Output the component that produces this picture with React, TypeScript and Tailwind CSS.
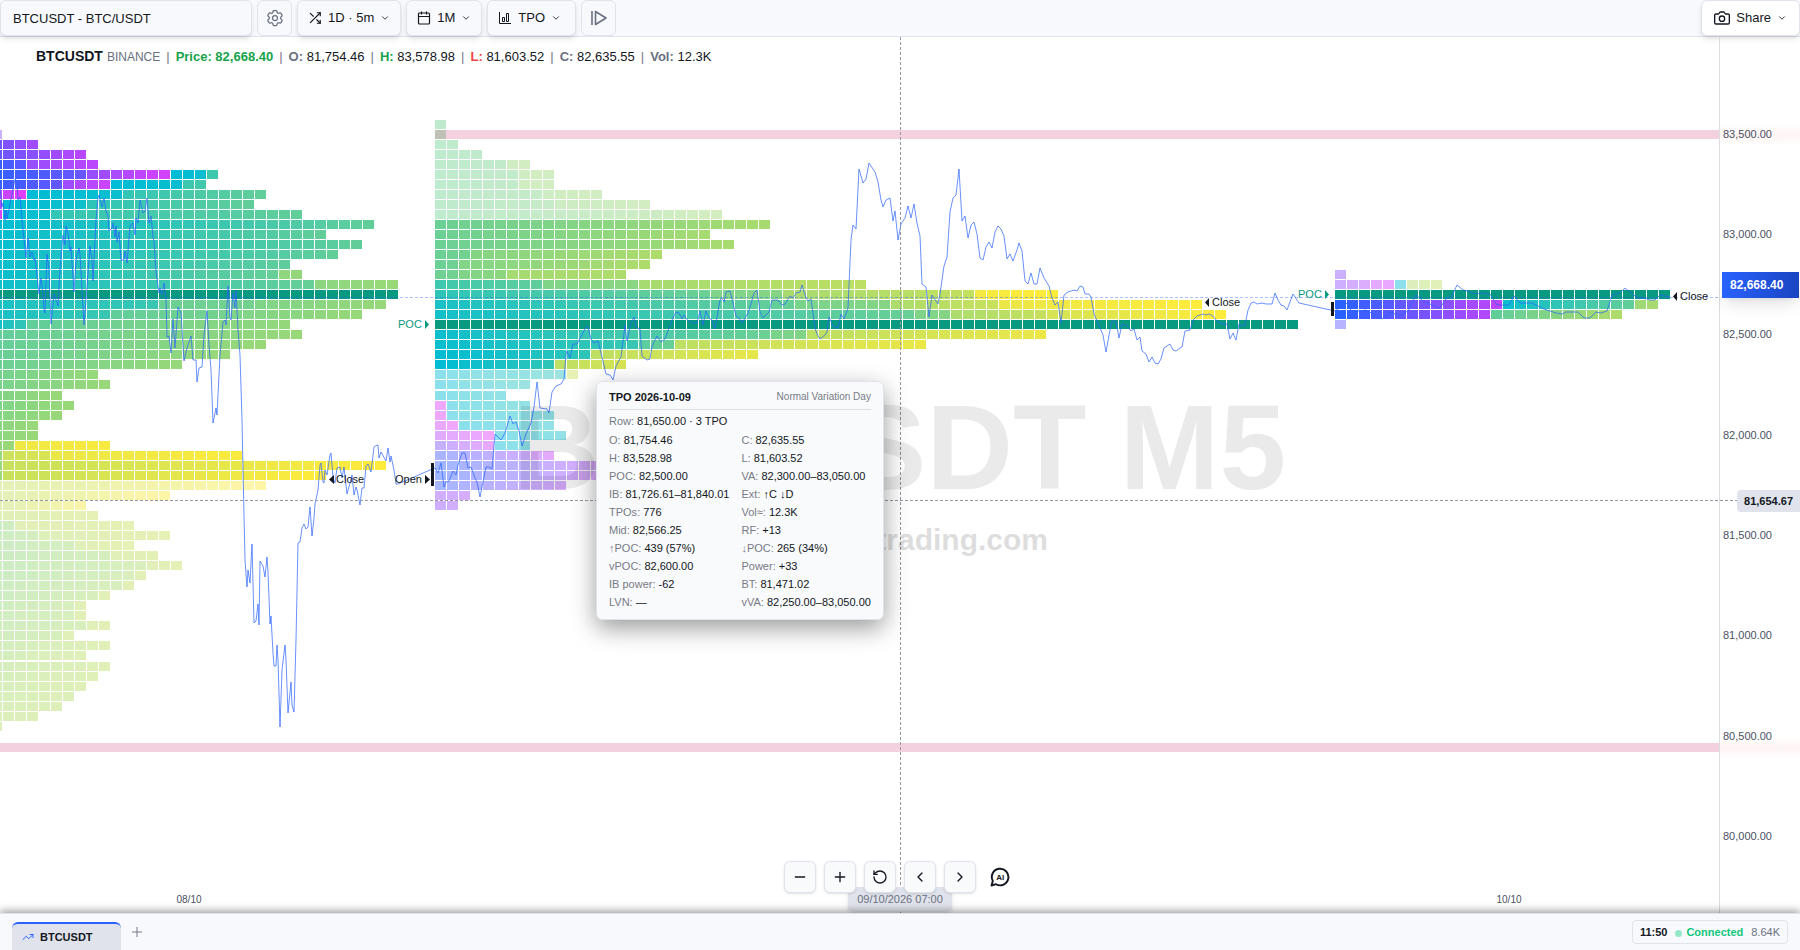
import type { ReactNode } from "react";
import { ChevronDown, ChevronLeft, ChevronRight, Minus, Plus, RotateCcw, TrendingUp } from "lucide-react";
import { FiCamera, FiShuffle } from "react-icons/fi";
import { HiOutlineCog6Tooth } from "react-icons/hi2";

// [number of blocks, first tone, last tone]
// tones 0..1 run from blue to magenta, tones 1..2 from cyan to yellow
type Run = [number, number, number];

type ProfileRow = {
  runs: Run[];
  faded?: boolean;
  poc?: boolean;
};

type Profile = {
  id: string;
  x: number;
  firstRow: number;
  rows: ProfileRow[];
};

const CHART_TOP = 37;
const CELL_WIDTH = 12;

const va = (...runs: Run[]): ProfileRow => ({ runs });
const out = (...runs: Run[]): ProfileRow => ({ runs, faded: true });
const poc = (count: number): ProfileRow => ({ runs: [[count, 1, 1]], poc: true });

const profiles: Profile[] = [
  {
    id: "2026-10-08",
    x: -9,
    firstRow: 0,
    rows: [
      out([1, 0.5, 0.5]),
      va([4, 0.38, 0.65]),
      va([8, 0.33, 0.78]),
      va([3, 0.1, 0.25], [6, 0.6, 0.8]),
      va([8, 0.05, 0.34], [7, 0.6, 0.93], [3, 1, 1.03], [1, 1.24, 1.24]),
      va([6, 0.08, 0.3], [4, 0.64, 0.88], [6, 1, 1.03], [2, 1.24, 1.26]),
      va([3, 0.75, 1], [8, 1, 1.04], [12, 1.2, 1.38]),
      va([1, 0.7, 0.7], [7, 1, 1.06], [14, 1.18, 1.38]),
      va([1, 0.95, 0.95], [4, 1, 1.05], [21, 1.2, 1.38]),
      va([32, 1.01, 1.38]),
      va([28, 1.02, 1.38]),
      va([31, 1.03, 1.38]),
      va([29, 1.04, 1.38]),
      va([25, 1.04, 1.37]),
      va([24, 1.04, 1.4], [2, 1.56, 1.58]),
      va([27, 1.05, 1.4], [7, 1.55, 1.6]),
      poc(34),
      va([14, 1.1, 1.22], [8, 1.42, 1.45], [11, 1.5, 1.59]),
      va([10, 1.1, 1.22], [10, 1.38, 1.46], [11, 1.5, 1.59]),
      va([3, 1.08, 1.18], [22, 1.38, 1.58]),
      va([26, 1.38, 1.6]),
      va([23, 1.39, 1.6]),
      va([20, 1.4, 1.6]),
      va([16, 1.42, 1.59]),
      va([9, 1.45, 1.59]),
      va([10, 1.47, 1.6]),
      va([6, 1.5, 1.6]),
      va([7, 1.5, 1.6]),
      va([6, 1.52, 1.6]),
      va([4, 1.54, 1.6]),
      va([4, 1.55, 1.6]),
      va([2, 1.56, 1.6], [8, 1.94, 1.97]),
      va([1, 1.6, 1.6], [4, 1.8, 1.85], [16, 1.92, 1.98]),
      va([1, 1.6, 1.6], [32, 1.78, 2]),
      va([1, 1.62, 1.62], [27, 1.78, 2]),
      out([23, 1.75, 2]),
      out([15, 1.75, 2]),
      out([8, 1.74, 1.94]),
      out([9, 1.73, 1.78]),
      out([2, 1.58, 1.6], [10, 1.74, 1.78]),
      out([4, 1.57, 1.62], [11, 1.72, 1.78]),
      out([7, 1.57, 1.64], [5, 1.74, 1.78]),
      out([10, 1.57, 1.65], [4, 1.74, 1.76]),
      out([13, 1.57, 1.67], [3, 1.74, 1.76]),
      out([12, 1.57, 1.67], [1, 1.75, 1.75]),
      out([11, 1.58, 1.67], [1, 1.75, 1.75]),
      out([9, 1.58, 1.67], [1, 1.75, 1.75]),
      out([7, 1.59, 1.66], [1, 1.75, 1.75]),
      out([7, 1.6, 1.66], [1, 1.75, 1.75]),
      out([8, 1.6, 1.67], [2, 1.74, 1.75]),
      out([6, 1.61, 1.66], [1, 1.74, 1.74]),
      out([10, 1.62, 1.74]),
      out([8, 1.63, 1.73]),
      out([10, 1.64, 1.74]),
      out([9, 1.65, 1.73]),
      out([8, 1.66, 1.73]),
      out([7, 1.67, 1.72]),
      out([6, 1.68, 1.72]),
      out([4, 1.69, 1.72]),
      out([1, 1.7, 1.7]),
    ],
  },
  {
    id: "2026-10-09",
    x: 435,
    firstRow: -1,
    rows: [
      out([1, 1.44, 1.44]),
      out([1, 1.44, 1.44]),
      out([2, 1.44, 1.45]),
      out([4, 1.44, 1.46]),
      out([6, 1.44, 1.47], [2, 1.6, 1.61]),
      out([7, 1.44, 1.48], [3, 1.6, 1.61]),
      out([7, 1.44, 1.48], [3, 1.6, 1.61]),
      out([9, 1.44, 1.5], [5, 1.59, 1.61]),
      out([10, 1.44, 1.51], [8, 1.57, 1.61]),
      out([24, 1.44, 1.62]),
      va([28, 1.42, 1.66]),
      va([23, 1.42, 1.65]),
      va([25, 1.42, 1.66]),
      va([3, 1.42, 1.44], [16, 1.52, 1.68]),
      va([2, 1.42, 1.43], [16, 1.51, 1.68]),
      va([2, 1.43, 1.44], [4, 1.5, 1.55], [10, 1.65, 1.68]),
      va([9, 1.25, 1.37], [8, 1.5, 1.54], [19, 1.65, 1.74]),
      va([23, 1.18, 1.42], [6, 1.5, 1.52], [16, 1.66, 1.76], [7, 1.96, 2]),
      va([30, 1.1, 1.4], [8, 1.48, 1.52], [9, 1.68, 1.78], [17, 1.92, 2]),
      va([40, 1.08, 1.41], [3, 1.5, 1.52], [8, 1.68, 1.77], [15, 1.84, 2]),
      poc(72),
      va([28, 1.05, 1.42], [3, 1.48, 1.5], [20, 1.74, 1.92]),
      va([17, 1.04, 1.22], [3, 1.36, 1.4], [21, 1.74, 1.92]),
      va([13, 1.01, 1.18], [14, 1.74, 1.9]),
      va([10, 1, 1.18], [6, 1.74, 1.84]),
      out([11, 1, 1.15], [1, 1.8, 1.8]),
      out([8, 1, 1.14]),
      out([6, 1, 1.06]),
      out([1, 0.97, 0.97], [7, 1, 1.08]),
      out([1, 0.96, 0.96], [9, 1, 1.06]),
      out([2, 0.93, 1], [8, 1, 1.05]),
      out([5, 0.8, 0.99], [6, 1, 1.05]),
      out([5, 0.48, 0.9], [3, 1, 1.03]),
      out([8, 0.15, 0.6], [2, 0.78, 0.84]),
      out([14, 0.05, 0.72]),
      out([14, 0.05, 0.74]),
      out([11, 0.1, 0.68]),
      out([3, 0.62, 0.68]),
      out([2, 0.58, 0.62]),
    ],
  },
  {
    id: "2026-10-10",
    x: 1335,
    firstRow: 14,
    rows: [
      out([1, 0.55, 0.55]),
      out([5, 0.58, 0.93], [1, 1, 1], [3, 1.7, 1.74]),
      poc(28),
      va([14, 0, 0.8], [11, 1.05, 1.38], [2, 1.62, 1.66]),
      va([13, 0, 0.74], [11, 1.38, 1.68]),
      out([1, 0.3, 0.3]),
    ],
  },
];

const pricePoints = `
0,187 2,207 3,203 5,220 6,210 7,219 11,199 15,179 17,181 18,200 20,197 23,230 26,258 28,238 30,257 32,252 34,260 35,258
39,294 41,278 43,294 44,310 45,313 47,254 49,270 51,324 54,294 56,300 58,306 60,270 63,235 65,245 66,226 68,233 70,251
71,247 74,292 76,260 79,248 80,255 84,325 86,300 90,246 92,260 93,281 96,220 98,198 99,195 102,207 104,198 106,211
108,216 109,231 112,228 113,223 115,237 116,226 117,242 119,232 121,260 124,260 125,251 127,263 130,226 133,223 135,235
136,218 138,223 140,200 143,213 145,211 147,198 149,223 151,216 153,237 154,242 156,272 159,293 160,288 162,295 164,283
166,300 167,337 169,336 171,353 173,319 175,348 178,307 181,313 184,361 187,348 191,336 193,360 196,360 197,382 199,368
202,367 204,335 207,311 209,345 211,370 213,423 216,408 217,415 220,355 223,322 225,320 226,325 228,286 230,318 231,320
233,293 235,308 236,290 238,330 240,355 242,420 243,470 245,560 247,587 248,570 250,583 252,544 254,623 256,621 258,604
259,625 260,561 263,566 265,577 267,557 268,572 270,624 271,616 273,653 274,666 276,666 277,645 278,660 280,727 282,670
285,645 286,660 288,713 291,682 292,705 294,712 296,640 298,543 300,542 302,528 304,524 306,529 308,527 310,507 312,536
314,518 315,504 318,490 320,465 321,463 323,482 324,483 325,470 327,475 330,455 331,453 333,478 335,483 337,468 340,467
342,478 344,467 347,494 350,483 352,475 354,495 356,487 357,490 360,505 362,488 364,488 366,466 368,464 371,472 374,447
375,446 378,445 379,458 381,452 386,461 388,448 390,462 391,456 394,470 396,484 398,484 430,470 435,468 438,473 441,463
444,487 446,482 449,481 453,471 456,475 458,465 462,453 465,453 468,468 471,467 475,478 477,482 480,497 482,487 486,467
489,467 492,469 495,434 501,440 505,433 510,416 513,424 516,422 519,431 522,446 526,434 531,423 534,407 537,382 540,408
547,409 549,413 552,392 556,386 561,384 564,379 566,355 567,351 570,358 573,344 577,344 583,333 586,327 588,327 591,339
594,343 598,341 602,357 606,374 610,375 613,380 616,366 621,357 625,325 627,341 631,323 634,317 636,327 640,329 642,356
647,360 650,359 652,346 657,336 661,342 665,339 672,320 676,312 679,313 682,319 684,315 688,321 693,323 697,323 700,311
703,325 706,311 709,318 712,320 715,329 720,300 722,298 724,302 726,292 730,291 733,303 736,316 740,319 742,323 748,313
751,304 754,293 757,290 760,312 763,318 769,312 772,300 778,300 782,305 785,304 790,296 793,298 796,293 800,292 802,285
806,298 808,301 811,299 815,328 817,334 820,339 825,335 827,332 829,317 833,326 838,328 841,314 844,319 848,308 851,240
853,225 856,229 859,169 863,183 866,179 869,163 875,172 878,182 881,200 883,207 886,200 890,198 893,221 895,211 898,240
901,224 905,218 908,206 911,218 914,204 917,223 920,236 922,284 926,287 929,317 932,295 938,304 940,294 944,266 947,257
950,212 953,198 956,195 959,169 962,221 965,216 968,238 971,225 974,222 977,234 980,258 983,260 986,247 989,242 992,248
995,232 998,226 1001,229 1004,236 1007,259 1010,254 1013,261 1017,250 1019,243 1022,251 1025,281 1028,284 1031,273
1034,284 1037,284 1040,268 1044,278 1049,286 1052,298 1055,305 1058,302 1061,323 1064,295 1068,292 1074,290 1077,291
1080,286 1083,287 1085,294 1089,294 1091,297 1094,314 1098,323 1103,335 1106,352 1110,330 1112,321 1116,322 1119,338
1122,324 1127,326 1131,331 1134,329 1137,340 1140,337 1142,351 1146,354 1149,362 1152,357 1155,363 1158,364 1161,359
1164,348 1170,344 1173,350 1176,351 1180,348 1182,347 1185,331 1190,330 1193,320 1197,316 1203,314 1206,315 1209,314
1213,316 1217,321 1222,324 1227,324 1230,339 1233,333 1236,340 1239,324 1242,326 1245,325 1248,310 1251,303 1254,302
1257,304 1262,303 1266,304 1272,304 1275,293 1278,300 1281,305 1284,306 1287,310 1293,294 1299,303 1335,311 1347,303
1352,312 1366,310 1382,319 1391,312 1399,316 1408,311 1416,295 1423,301 1432,305 1440,308 1446,299 1452,296 1457,285
1463,290 1468,291 1474,294 1482,293 1490,294 1497,305 1509,305 1514,296 1520,303 1532,303 1544,309 1556,313 1562,314
1566,312 1578,312 1584,318 1590,318 1596,312 1601,313 1607,311 1612,295 1620,293 1625,288 1630,292 1638,298 1643,298
1650,300 1655,300 1660,295 1670,297
`;

const priceTicks = [
  { label: "83,500.00", y: 134 },
  { label: "83,000.00", y: 234 },
  { label: "82,500.00", y: 334 },
  { label: "82,000.00", y: 435 },
  { label: "81,500.00", y: 535 },
  { label: "81,000.00", y: 635 },
  { label: "80,500.00", y: 736 },
  { label: "80,000.00", y: 836 },
];

const tpoStats: [string, string][] = [
  ["O", "81,754.46"],
  ["C", "82,635.55"],
  ["H", "83,528.98"],
  ["L", "81,603.52"],
  ["POC", "82,500.00"],
  ["VA", "82,300.00–83,050.00"],
  ["IB", "81,726.61–81,840.01"],
  ["Ext", "↑C ↓D"],
  ["TPOs", "776"],
  ["Vol≈", "12.3K"],
  ["Mid", "82,566.25"],
  ["RF", "+13"],
  ["↑POC", "439 (57%)"],
  ["↓POC", "265 (34%)"],
  ["vPOC", "82,600.00"],
  ["Power", "+33"],
  ["IB power", "-62"],
  ["BT", "81,471.02"],
  ["LVN", "—"],
  ["vVA", "82,250.00–83,050.00"],
];

const quoteFields = [
  { label: "O:", value: "81,754.46", color: "text-[#6a7080]" },
  { label: "H:", value: "83,578.98", color: "text-[#16a34a]" },
  { label: "L:", value: "81,603.52", color: "text-[#ef4444]" },
  { label: "C:", value: "82,635.55", color: "text-[#6a7080]" },
  { label: "Vol:", value: "12.3K", color: "text-[#6a7080]" },
];

function mix(from: number[], to: number[], t: number) {
  return `rgb(${from.map((c, i) => Math.round(c + (to[i] - c) * t)).join(",")})`;
}

function toneColor(tone: number, secondHalf: boolean) {
  if (secondHalf) return mix([0, 188, 212], [255, 235, 59], tone - 1);
  return mix([41, 98, 255], [224, 64, 251], tone);
}

// rows are slightly taller than 10px, so one extra pixel appears every 27 rows
function rowTop(row: number) {
  return 130 + row * 10 + Math.floor((row + 1) / 27);
}

function ProfileBlocks({ profile }: { profile: Profile }) {
  return (
    <g shapeRendering="crispEdges">
      {profile.rows.map((row, index) => {
        let column = 0;

        return (
          <g key={index} opacity={row.faded ? 0.45 : 1}>
            {row.runs.map(([count, first, last]) =>
              Array.from({ length: count }, (_, i) => {
                const tone = count > 1 ? first + ((last - first) * i) / (count - 1) : first;
                const x = profile.x + column * CELL_WIDTH;
                column += 1;

                return (
                  <rect
                    key={x}
                    x={x}
                    y={rowTop(profile.firstRow + index)}
                    width={CELL_WIDTH - 1}
                    height={9}
                    fill={row.poc ? "#089981" : toneColor(tone, first >= 1)}
                  />
                );
              }),
            )}
          </g>
        );
      })}
    </g>
  );
}

function ChartCanvas() {
  return (
    <svg
      className="h-full min-w-0 flex-1 font-['Liberation_Sans',Arial,sans-serif] text-[11px]"
      role="img"
      aria-label="BTCUSDT TPO chart"
    >
      <g transform={`translate(0 ${-CHART_TOP})`}>
        {profiles.map((profile) => (
          <ProfileBlocks key={profile.id} profile={profile} />
        ))}

        <rect x="435" y="130" width="100%" height="9" fill="#c2185b" opacity="0.2" />
        <rect x="0" y="743" width="100%" height="9" fill="#c2185b" opacity="0.2" />

        <line x1="0" x2="100%" y1="297.5" y2="297.5" stroke="#2962ff" strokeOpacity="0.4" strokeDasharray="3 2" />
        <polyline points={pricePoints} fill="none" stroke="#2962ff" strokeOpacity="0.7" />

        <g fill="#131722">
          <rect x="431" y="463" width="3" height="23" />
          <rect x="1331" y="302" width="3" height="14" />
          <path d="M334 475v9l-5-4.500z M425 475v9l5-4.500z M1209 298v9l-4-4.500z M1677 292v9l-4-4.500z" />
          <text x="336" y="483">Close</text>
          <text x="395" y="483">Open</text>
          <text x="1212" y="306">Close</text>
          <text x="1680" y="300">Close</text>
        </g>
        <g fill="#089981">
          <path d="M425 320v9l4-4.500z M1325 290v9l4-4.500z" />
          <text x="398" y="328">POC</text>
          <text x="1298" y="298">POC</text>
        </g>

        <line x1="0" x2="100%" y1="500.5" y2="500.5" stroke="#9598a1" strokeDasharray="3 2" />
        <line x1="900.5" x2="900.5" y1="37" y2="914" stroke="#9598a1" strokeDasharray="3 2" />

        <g fill="#000000" fontWeight="700">
          <text x="513" y="489" fontSize="120" opacity="0.08">BTCUSDT M5</text>
          <text x="1048" y="550" fontSize="30" textAnchor="end" opacity="0.13">trading.com</text>
        </g>

        <g fill="#4a5163" fontSize="10" textAnchor="middle">
          <text x="189" y="903">08/10</text>
          <text x="1509" y="903">10/10</text>
        </g>
      </g>
    </svg>
  );
}

function PriceAxis() {
  return (
    <div className="relative w-[81px] shrink-0 border-l border-[#dcdde1]">
      <svg className="h-full w-full font-['Liberation_Sans',Arial,sans-serif] text-[11px]" aria-hidden="true">
        <defs>
          <linearGradient id="band-glow" x1="0" x2="0" y1="0" y2="1">
            <stop offset="0" stopColor="#ef4444" stopOpacity="0" />
            <stop offset="0.5" stopColor="#ef4444" stopOpacity="0.06" />
            <stop offset="1" stopColor="#ef4444" stopOpacity="0" />
          </linearGradient>
        </defs>
        <g transform={`translate(0 ${-CHART_TOP})`}>
          <rect x="0" y="124" width="100%" height="22" fill="url(#band-glow)" />
          <rect x="0" y="737" width="100%" height="22" fill="url(#band-glow)" />
          <line x1="0" x2="18" y1="500.5" y2="500.5" stroke="#9598a1" strokeDasharray="3 2" />
          <g fill="#4a5163">
            {priceTicks.map((tick) => (
              <text key={tick.label} x="3" y={tick.y + 4}>
                {tick.label}
              </text>
            ))}
          </g>
        </g>
      </svg>

      <div className="absolute top-[235px] right-px left-[2px] bg-linear-to-r from-[#2962ff] to-[#1a44c2] px-2 text-xs leading-[26px] font-bold text-white shadow-lg">
        82,668.40
      </div>
      <div className="absolute top-[453px] right-0 rounded-l bg-[#e0e3eb] px-[7px] text-[11px] leading-[22px] font-bold text-[#131722]">
        81,654.67
      </div>
    </div>
  );
}

function TpoTooltip() {
  return (
    <div className="absolute top-[344px] left-[596px] rounded-md border border-[#e0e3eb] bg-[#f8fafc] px-3 pt-2 pb-[9px] text-[11px] text-[#131722] shadow-[0_8px_24px_rgba(0,0,0,0.4)]">
      <div className="flex items-center justify-between border-b border-[#dcdee3] pb-[5px]">
        <h2 className="leading-[14px] font-bold">TPO 2026-10-09</h2>
        <span className="text-[10px] leading-[14px] text-[#787b86]">Normal Variation Day</span>
      </div>

      <p className="mt-[3px] leading-4">
        <span className="text-[#787b86]">Row:</span> 81,650.00 · 3 TPO
      </p>

      <dl className="mt-[3px] grid grid-cols-[auto_auto] gap-x-3 gap-y-0.5">
        {tpoStats.map(([label, value]) => (
          <div key={label} className="flex gap-[3px] leading-4 whitespace-nowrap">
            <dt className="text-[#787b86]">{label}:</dt>
            <dd>{value}</dd>
          </div>
        ))}
      </dl>
    </div>
  );
}

function ToolbarButton({ label, icon }: { label: string; icon: ReactNode }) {
  return (
    <button
      type="button"
      className="flex h-9 items-center gap-[6px] rounded-md border border-[#e0e3eb] bg-[#f8f9fc] px-[10px] text-[13px] shadow-md"
    >
      {icon}
      <span>{label}</span>
      <ChevronDown className="size-[10px]" />
    </button>
  );
}

function CalendarIcon() {
  return (
    <svg viewBox="0 0 14 14" className="size-[14px]" fill="none" stroke="currentColor" strokeWidth="1.200">
      <rect x="1.500" y="2" width="11" height="11" rx="1" />
      <path d="M1.500 5.500h11M4.500 0.500v3M9.500 0.500v3" />
    </svg>
  );
}

function ProfileIcon() {
  return (
    <svg viewBox="0 0 14 14" className="size-[14px]" fill="none" stroke="currentColor">
      <path d="M1.500 1v11.500H13" />
      <path d="M4.500 10.500v-4h2v4zM8.500 10.500v-8h2v8z" />
    </svg>
  );
}

function ReplayIcon() {
  return (
    <svg viewBox="0 0 18 18" className="size-[18px]" fill="none" stroke="currentColor" strokeWidth="1.600">
      <path d="M2 2v14" />
      <path d="M5.500 2.500v13L16 9z" strokeLinejoin="round" />
    </svg>
  );
}

function Toolbar() {
  return (
    <header className="flex h-[37px] shrink-0 items-start gap-[5px] border-b border-[#e0e3eb] bg-[#f8f9fc]">
      <input
        type="text"
        aria-label="Symbol"
        defaultValue="BTCUSDT - BTC/USDT"
        className="h-9 w-[252px] rounded-md border border-[#e0e3eb] bg-[#f8f9fc] px-3 text-[13px] shadow-md outline-none"
      />
      <button
        type="button"
        aria-label="Settings"
        className="flex h-9 w-[35px] items-center justify-center rounded-md border border-[#e0e3eb] text-[#6a7080]"
      >
        <HiOutlineCog6Tooth className="size-5" />
      </button>
      <ToolbarButton label="1D · 5m" icon={<FiShuffle className="size-[14px]" />} />
      <ToolbarButton label="1M" icon={<CalendarIcon />} />
      <div className="w-[89px] *:w-full">
        <ToolbarButton label="TPO" icon={<ProfileIcon />} />
      </div>
      <button
        type="button"
        aria-label="Replay"
        className="flex h-9 w-[35px] items-center justify-center rounded-md border border-[#e0e3eb] text-[#6a7080]"
      >
        <ReplayIcon />
      </button>

      <button
        type="button"
        className="ml-auto flex h-9 items-center gap-[6px] rounded-md border border-[#e0e3eb] bg-white px-3 text-[13px] shadow-md"
      >
        <FiCamera className="size-4" />
        <span>Share</span>
        <ChevronDown className="size-[10px]" />
      </button>
    </header>
  );
}

function QuoteLine() {
  return (
    <div className="absolute top-[11px] left-9 flex items-baseline gap-[6px] text-[13px] leading-4">
      <div className="flex items-baseline gap-1">
        <strong className="text-sm leading-4">BTCUSDT</strong>
        <span className="text-xs text-[#6a7080]">BINANCE</span>
      </div>
      <span className="text-[#787b86]">|</span>
      <strong className="text-[#16a34a]">Price: 82,668.40</strong>
      {quoteFields.map((field) => (
        <div key={field.label} className="flex gap-[6px]">
          <span className="text-[#787b86]">|</span>
          <span>
            <strong className={field.color}>{field.label}</strong> {field.value}
          </span>
        </div>
      ))}
    </div>
  );
}

function ChartControls() {
  const controls = [
    { label: "Zoom out", icon: <Minus className="size-4" /> },
    { label: "Zoom in", icon: <Plus className="size-4" /> },
    { label: "Reset", icon: <RotateCcw className="size-4" /> },
    { label: "Previous", icon: <ChevronLeft className="size-4" /> },
    { label: "Next", icon: <ChevronRight className="size-4" /> },
  ];

  return (
    <div className="absolute inset-x-0 bottom-[20px] flex justify-center gap-2">
      {controls.map((control) => (
        <button
          key={control.label}
          type="button"
          aria-label={control.label}
          className="flex size-8 items-center justify-center rounded-md border border-[#e0e3eb] bg-[#f8fafc] shadow-sm"
        >
          {control.icon}
        </button>
      ))}
      <button type="button" aria-label="AI assistant" className="flex size-8 items-center justify-center">
        <svg viewBox="0 0 20 20" className="size-5" fill="none" stroke="currentColor" strokeWidth="1.900">
          <path d="M1.500 18.500l1.300-4.600A8.300 8.300 0 1 1 6 17.200z" strokeLinejoin="round" />
          <text
            x="10.300"
            y="12.500"
            textAnchor="middle"
            fontSize="8"
            fontWeight="700"
            fill="currentColor"
            stroke="none"
          >
            AI
          </text>
        </svg>
      </button>
    </div>
  );
}

function StatusBar() {
  return (
    <footer className="relative flex h-[37px] shrink-0 items-end justify-between border-t border-[#e0e3eb] bg-[#f8f9fc] px-3 text-[11px] shadow-[0_-2px_8px_rgba(0,0,0,0.4)]">
      <div className="flex items-end gap-2">
        <button
          type="button"
          className="flex h-7 w-[109px] items-center gap-[6px] rounded-t-md border-t-2 border-[#2962ff] bg-[#e0e3eb] px-[10px] font-bold"
        >
          <TrendingUp className="size-3 text-[#2962ff]" />
          BTCUSDT
        </button>
        <button type="button" aria-label="Add chart" className="mb-[10px] text-[#787b86]">
          <Plus className="size-4" strokeWidth={1.5} />
        </button>
      </div>

      <div className="mb-[6px] flex h-6 items-center gap-2 rounded border border-[#e0e3eb] px-[7px]">
        <strong>11:50</strong>
        <span className="flex items-center gap-1 font-bold text-[#10c77c]">
          <span className="mt-[2px] size-[7px] rounded-full bg-[#94e8c6]" />
          Connected
        </span>
        <span className="text-[#6a7080]">8.64K</span>
      </div>
    </footer>
  );
}

export default function App() {
  return (
    <div className="flex h-screen flex-col overflow-hidden bg-white font-['Liberation_Sans',Arial,sans-serif] text-[#131722]">
      <Toolbar />

      <main className="relative flex min-h-0 flex-1">
        <ChartCanvas />
        <PriceAxis />
        <QuoteLine />
        <TpoTooltip />
        <time className="absolute bottom-[2px] left-[848px] w-[104px] rounded bg-[#e0e3eb] text-center text-[11px] leading-6 text-[#6a7080] shadow-md">
          09/10/2026 07:00
        </time>
        <ChartControls />
      </main>

      <StatusBar />
    </div>
  );
}
